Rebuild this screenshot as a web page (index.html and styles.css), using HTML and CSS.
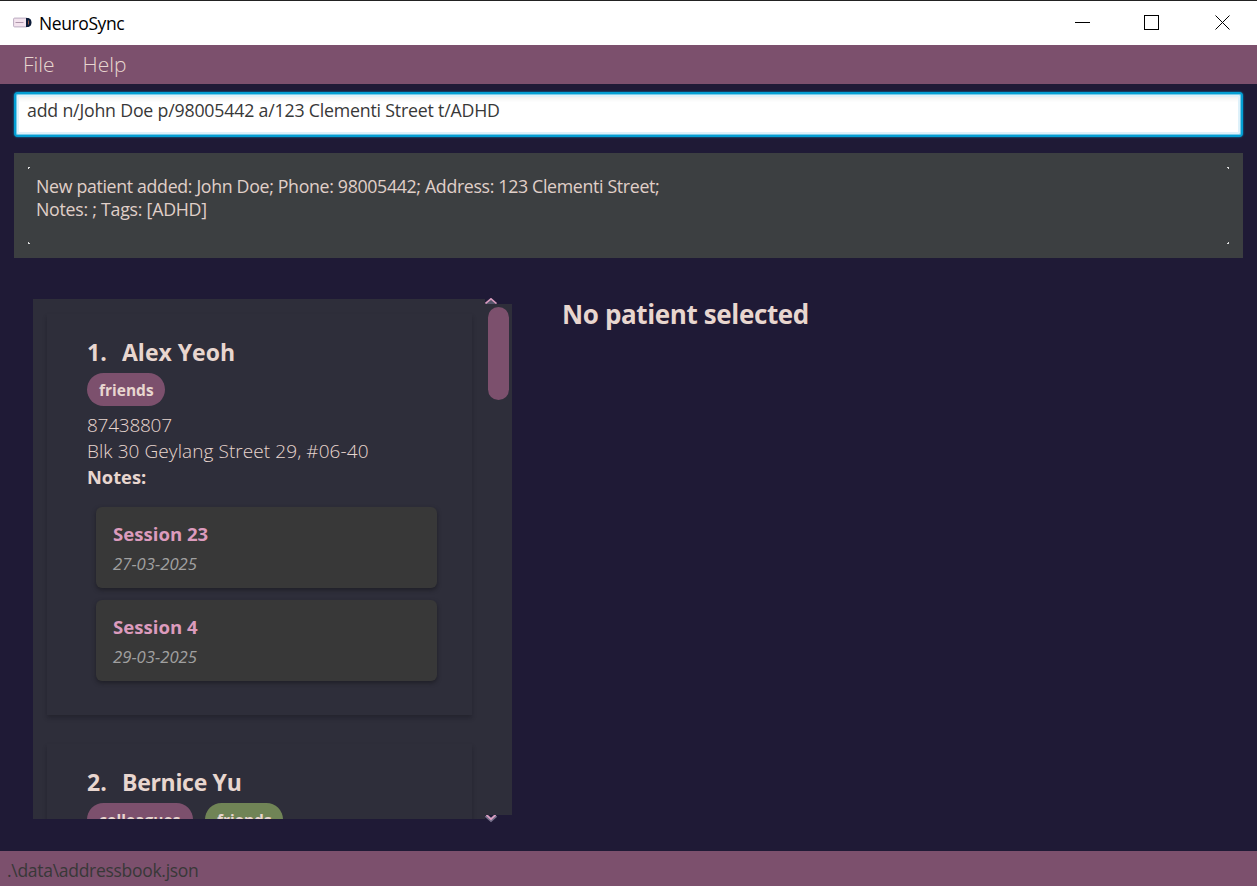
FILE: index.html
```html
<!DOCTYPE html>
<html lang="en">
<head>
<meta charset="utf-8">
<title>NeuroSync</title>
<link rel="stylesheet" href="styles.css">
</head>
<body>
<div class="window">
  <header class="titlebar">
    <svg class="app-icon" width="19" height="12" viewBox="0 0 19 12">
      <rect x="0.6" y="1.1" width="14" height="8.8" rx="1" fill="#f3e3ee" stroke="#b9aabf"/>
      <path d="M2.500 5.500h8" stroke="#a58ca2" stroke-width="0.900"/>
      <path d="M13 1h2.500c2 .6 3 2.200 3 4.500s-1 3.900-3 4.500H13z" fill="#0c1c38"/>
      <path d="M15.500 3.500v4" stroke="#9a5b45"/>
    </svg>
    <span class="app-name">NeuroSync</span>
    <svg class="controls" width="156" height="16" viewBox="0 0 156 16" fill="none" stroke="#000" shape-rendering="crispEdges">
      <path d="M0 7.500h15"/>
      <rect x="69.500" y="0.500" width="14" height="14"/>
      <path d="M140.500 0.500l14 14M154.500 0.500l-14 14" shape-rendering="auto"/>
    </svg>
  </header>
  <nav class="menubar"><span class="menu-file">File</span><span class="menu-help">Help</span></nav>
  <div class="command"><span class="command-text">add n/John Doe p/98005442 a/123 Clementi Street t/ADHD</span></div>
  <div class="result">
    <i class="dot tl"></i><i class="dot tr"></i><i class="dot bl"></i><i class="dot br"></i>
    <p class="result-first">New patient added: John Doe; Phone: 98005442; Address: 123 Clementi Street;</p>
    <p class="result-second">Notes: ; Tags: [ADHD]</p>
  </div>
  <main class="content">
    <section class="list">
      <div class="cards">
        <article class="card">
          <h2 class="name"><span class="index">1.</span><span class="alex">Alex Yeoh</span></h2>
          <div class="tags"><span class="tag friends">friends</span></div>
          <p class="line phone">87438807</p>
          <p class="line address">Blk 30 Geylang Street 29, #06-40</p>
          <p class="line notes">Notes:</p>
          <div class="sessions">
            <div class="session"><b class="session-title">Session 23</b><em class="session-date">27-03-2025</em></div>
            <div class="session"><b class="session-title">Session 4</b><em class="session-date">29-03-2025</em></div>
          </div>
        </article>
        <article class="card">
          <h2 class="name"><span class="index">2.</span><span class="bernice">Bernice Yu</span></h2>
          <div class="tags"><span class="tag colleagues">colleagues</span><span class="tag friends green">friends</span></div>
        </article>
      </div>
      <div class="scroll">
        <svg class="arrow" width="13" height="6" viewBox="0 0 13 6"><path d="M0.500 6L6 0.800L11.500 6z" fill="#55556a"/><path d="M0.500 5.500L6 0.800L11.500 5.500" fill="none" stroke="#d79bbd" stroke-width="1.600"/></svg>
        <div class="track"><div class="thumb"></div></div>
        <svg class="arrow down" width="13" height="8" viewBox="0 0 13 8"><path d="M1 0.500L6 5L11 0.500" fill="none" stroke="#77718b" stroke-width="3.500"/><path d="M1.500 0L6 4.200L10.500 0" fill="none" stroke="#e0a0c4" stroke-width="1.600"/></svg>
      </div>
    </section>
    <section class="detail"><h1 class="empty">No patient selected</h1></section>
  </main>
  <footer class="status"><span class="path">.\data\addressbook.json</span></footer>
</div>
</body>
</html>
```
FILE: styles.css
```css
* { box-sizing: border-box; margin: 0; padding: 0; }
body { font-family: "Open Sans", "Noto Sans", sans-serif; background: #1f1a36; overflow: hidden; }
span, p, h1, h2, b, em { white-space: nowrap; }
.window { width: 1257px; height: 886px; display: flex; flex-direction: column; }
.titlebar { height: 45px; flex: none; background: #fff; border-top: 1px solid #222; display: flex; align-items: center; padding: 0 26px 0 13px; }
.app-name { font-size: 17.5px; letter-spacing: -0.4px; margin-left: 7px; line-height: 24px; color: #000; }
.controls { margin-left: auto; }
.menubar { height: 39px; flex: none; background: #7c506d; color: #e8d6cf; font-size: 21px; font-weight: 300; line-height: 39px; padding-left: 23px; display: flex; gap: 28px; }
.command { height: 45px; flex: none; margin: 8px 14px 0; border: 2px solid #039ed3; border-radius: 4px; background: #fff; box-shadow: 0 0 2px #039ed3, inset 0 0 0 1px #7bcbe8, inset 0 0 0 3px #def1fa, inset 0 7px 4px -2px #eee; padding: 4px 11px; color: #383838; font-size: 17.75px; letter-spacing: -0.2px; line-height: 24px; }
.result { position: relative; height: 105px; flex: none; margin: 16px 14px 0; padding: 22px; background: #3c3f41; color: #e0d0c9; font-size: 17.75px; line-height: 23px; }
.result-first { letter-spacing: -0.33px; }
.result-second { letter-spacing: -0.25px; }
.dot { position: absolute; width: 2px; height: 2px; border: 0 solid #ddd; }
.tl { left: 14px; top: 14px; border-width: 1px 0 0 1px; }
.tr { right: 14px; top: 14px; border-width: 1px 1px 0 0; }
.bl { left: 14px; bottom: 14px; border-width: 0 0 1px 1px; }
.br { right: 14px; bottom: 14px; border-width: 0 1px 1px 0; }
.content { height: 593px; flex: none; display: flex; padding: 41px 0 0 33px; }
.list { width: 479px; height: 520px; display: flex; }
.cards { width: 452px; height: 520px; background: #2e2e3a; overflow: hidden; padding: 15px 13px 0 14px; }
.card { height: 401px; margin-bottom: 29px; padding: 23px 35px 0 40px; box-shadow: 0 3px 4px rgba(20,20,30,.38); color: #e8d6cf; background: #2e2e3a; }
.name { font-size: 23px; line-height: 30px; font-weight: 700; display: flex; }
.bernice { letter-spacing: -0.3px; }
.index { width: 35px; }
.tags { display: flex; gap: 12px; margin-top: 6px; height: 33px; }
.tag { height: 33px; border-radius: 17px; padding: 0 12px; line-height: 34px; font-size: 15.5px; font-weight: 700; background: #7c506d; width: 78px; }
.tag.colleagues { width: 106px; }
.tag.green { background: #708456; }
.line { font-size: 19px; font-weight: 300; line-height: 26px; }
.phone { margin-top: 6px; letter-spacing: -0.25px; }
.address { letter-spacing: 0.08px; }
.line.notes { font-weight: 700; font-size: 18.3px; }
.sessions { margin: 17px 0 0 9px; display: grid; gap: 12px; }
.session { height: 81px; background: #383838; border-radius: 6px; padding: 14px 17px; box-shadow: 0 2px 4px rgba(15,15,20,.5); display: flex; flex-direction: column; }
.session-title { font-size: 18.6px; line-height: 26px; color: #dc9bbd; }
.session-date { font-size: 16.7px; line-height: 22px; margin-top: 6px; color: #a0a0a0; }
.scroll { width: 27px; display: flex; flex-direction: column; height: 526px; margin-top: -1px; }
.arrow { flex: none; display: block; }
.track { height: 511px; flex: none; background: #2e2e3a; padding: 3px; }
.thumb { height: 93px; width: 21px; border-radius: 11px; background: #7c506d; }
.detail { padding-left: 50px; }
.empty { color: #e8d6cf; font-size: 26px; letter-spacing: -0.37px; line-height: 30px; }
.status { height: 35px; flex: none; background: #7c506d; padding-left: 7px; color: #383838; font-size: 17.5px; letter-spacing: -0.29px; line-height: 38px; overflow: hidden; }
```
